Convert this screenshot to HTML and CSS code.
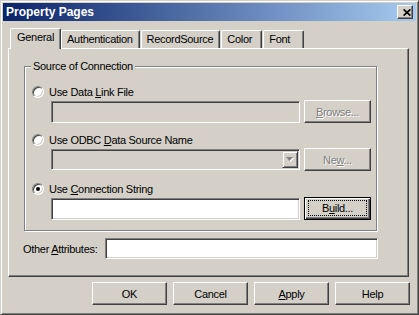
FILE: index.html
```html
<!DOCTYPE html>
<html>

<head>
    <title>Property Pages</title>
    <meta name="viewport" content="width=device-width, initial-scale=1.0">
    <link rel="stylesheet" href="styles.css">
</head>

<body>
    <div class="window">
        <div class="titlebar">
            <span class="title">Property Pages</span>
            <span class="close">
                <svg width="8" height="7" viewBox="0 0 8 7">
                    <path d="M0.6 0.4 L7.4 6.6 M7.4 0.4 L0.6 6.6" stroke="#000" stroke-width="1.7" fill="none"/>
                </svg>
            </span>
        </div>

        <div class="tabs">
            <div class="tab active">General</div>
            <div class="tab">Authentication</div>
            <div class="tab">RecordSource</div>
            <div class="tab">Color</div>
            <div class="tab">Font</div>
        </div>

        <div class="panel">
            <div class="group">
                <div class="group-caption">Source of Connection</div>

                <div class="option">
                    <div class="radio-row"><span class="radio"></span><span>Use Data <u>L</u>ink File</span></div>
                    <div class="ctrl-row">
                        <div class="textbox disabled"></div>
                        <div class="btn small disabled"><span><u>B</u>rowse...</span></div>
                    </div>
                </div>

                <div class="option second">
                    <div class="radio-row"><span class="radio"></span><span>Use ODBC <u>D</u>ata Source Name</span></div>
                    <div class="ctrl-row">
                        <div class="textbox disabled combo">
                            <span class="drop">
                                <svg width="8" height="5" viewBox="0 0 8 5">
                                    <polygon points="1,1 8,1 4.5,5" fill="#fff"/>
                                    <polygon points="0,0 7,0 3.5,4" fill="#808080"/>
                                </svg>
                            </span>
                        </div>
                        <div class="btn small disabled"><span>Ne<u>w</u>...</span></div>
                    </div>
                </div>

                <div class="option third">
                    <div class="radio-row"><span class="radio checked"></span><span>Use <u>C</u>onnection String</span></div>
                    <div class="ctrl-row">
                        <div class="textbox"></div>
                        <div class="btn small default"><span class="focus">B<u>u</u>ild...</span></div>
                    </div>
                </div>
            </div>

            <div class="attr-row">
                <label>Other <u>A</u>ttributes:</label>
                <div class="textbox wide"></div>
            </div>
        </div>

        <div class="buttons">
            <div class="btn">OK</div>
            <div class="btn">Cancel</div>
            <div class="btn"><span><u>A</u>pply</span></div>
            <div class="btn">Help</div>
        </div>
    </div>
</body>

</html>
```

FILE: styles.css
```css
body {
    margin: 0;
    background-color: #d4d0c8;
    font-family: 'Liberation Sans', Arial, sans-serif;
    font-size: 11px;
    letter-spacing: -0.3px;
    color: #000;
}

u {
    text-decoration: underline;
    text-underline-offset: 1px;
}

.window {
    width: 419px;
    height: 315px;
    box-sizing: border-box;
    padding: 2px;
    background-color: #d4d0c8;
    border: 1px solid;
    border-color: #d4d0c8 #404040 #404040 #d4d0c8;
    box-shadow: inset 1px 1px #fff, inset -1px -1px #808080;
}

/* title bar */

.titlebar {
    height: 18px;
    display: flex;
    align-items: center;
    justify-content: space-between;
    padding: 0 3px;
    background: linear-gradient(to right, #0a246a, #a6caf0);
}

.title {
    color: #fff;
    font-weight: bold;
    font-size: 12px;
    letter-spacing: 0;
}

.close {
    width: 16px;
    height: 14px;
    box-sizing: border-box;
    display: flex;
    align-items: center;
    padding-left: 5px;
    background-color: #d4d0c8;
    border: 1px solid;
    border-color: #fff #404040 #404040 #fff;
    box-shadow: inset -1px -1px #808080;
}

/* tabs */

.tabs {
    display: flex;
    align-items: flex-end;
    height: 20px;
    margin: 7px 0 0 7px;
    position: relative;
    z-index: 1;
}

.tab {
    height: 18px;
    min-width: 41px;
    box-sizing: border-box;
    padding: 2px 6px 0 5px;
    line-height: 13px;
    background-color: #d4d0c8;
    border-top: 1px solid #fff;
    border-left: 1px solid #fff;
    border-right: 1px solid #404040;
    border-radius: 2px 2px 0 0;
    box-shadow: inset -1px 0 #808080;
}

.tab + .tab {
    margin-left: 1px;
}

.tab.active {
    height: 21px;
    margin-bottom: -1px;
    padding: 2px 6px 0 6px;
}

.tab.active + .tab {
    margin-left: 0;
}

/* panel */

.panel {
    width: 401px;
    height: 229px;
    box-sizing: border-box;
    margin-left: 5px;
    border: 1px solid;
    border-color: #fff #404040 #404040 #fff;
    box-shadow: inset -1px -1px #808080;
}

.group {
    width: 353px;
    margin: 17px 0 0 15px;
    padding: 0 0 10px 7px;
    box-sizing: border-box;
    border: 1px solid #808080;
    box-shadow: inset 1px 1px #fff, 1px 1px #fff;
}

.group-caption {
    display: table;
    margin: -7px 0 0 -1px;
    padding: 0 2px;
    line-height: 13px;
    background-color: #d4d0c8;
}

.option {
    margin-top: 13px;
}

.option.second {
    margin-top: 11px;
}

.option.third {
    margin-top: 12px;
}

.radio-row {
    display: flex;
    align-items: center;
    gap: 5px;
    height: 12px;
    line-height: 12px;
}

.radio {
    width: 12px;
    height: 12px;
    box-sizing: border-box;
    display: flex;
    align-items: center;
    justify-content: center;
    border-radius: 50%;
    background-color: #fff;
    border: 1px solid;
    border-color: #808080 #fff #fff #808080;
    box-shadow: inset 1px 1px #404040, inset -1px -1px #d4d0c8;
}

.radio.checked::after {
    content: "";
    width: 4px;
    height: 4px;
    border-radius: 50%;
    background-color: #000;
}

.ctrl-row {
    display: flex;
    align-items: center;
    gap: 4px;
    margin: 2px 0 0 19px;
}

.textbox {
    width: 249px;
    height: 22px;
    box-sizing: border-box;
    background-color: #fff;
    border: 1px solid;
    border-color: #808080 #fff #fff #808080;
    box-shadow: inset 1px 1px #404040, inset -1px -1px #d4d0c8;
}

.textbox.disabled {
    background-color: #d4d0c8;
}

.combo {
    height: 21px;
    display: flex;
    justify-content: flex-end;
    padding: 1px;
}

.drop {
    width: 16px;
    box-sizing: border-box;
    display: flex;
    align-items: center;
    justify-content: center;
    border: 1px solid;
    border-color: #d4d0c8 #404040 #404040 #d4d0c8;
    box-shadow: inset 1px 1px #fff, inset -1px -1px #808080;
}

/* buttons */

.btn {
    width: 75px;
    height: 23px;
    box-sizing: border-box;
    display: flex;
    align-items: center;
    justify-content: center;
    background-color: #d4d0c8;
    border: 1px solid;
    border-color: #fff #404040 #404040 #fff;
    box-shadow: inset -1px -1px #808080;
}

.btn.small {
    width: 67px;
}

.btn.disabled {
    color: #808080;
    text-shadow: 1px 1px 0 #fff;
}

.btn.default {
    border-color: #000;
    box-shadow: inset 1px 1px #fff, inset -1px -1px #404040, inset -2px -2px #808080;
}

.focus {
    flex: 1;
    align-self: stretch;
    margin: 2px 3px 3px 3px;
    border: 1px dotted #000;
    display: flex;
    align-items: center;
    justify-content: center;
}

.attr-row {
    width: 355px;
    display: flex;
    align-items: center;
    justify-content: space-between;
    margin: 7px 0 0 14px;
}

.textbox.wide {
    width: 273px;
    height: 21px;
}

.buttons {
    display: flex;
    justify-content: flex-end;
    gap: 6px;
    margin: 5px 6px 0 0;
}
```
